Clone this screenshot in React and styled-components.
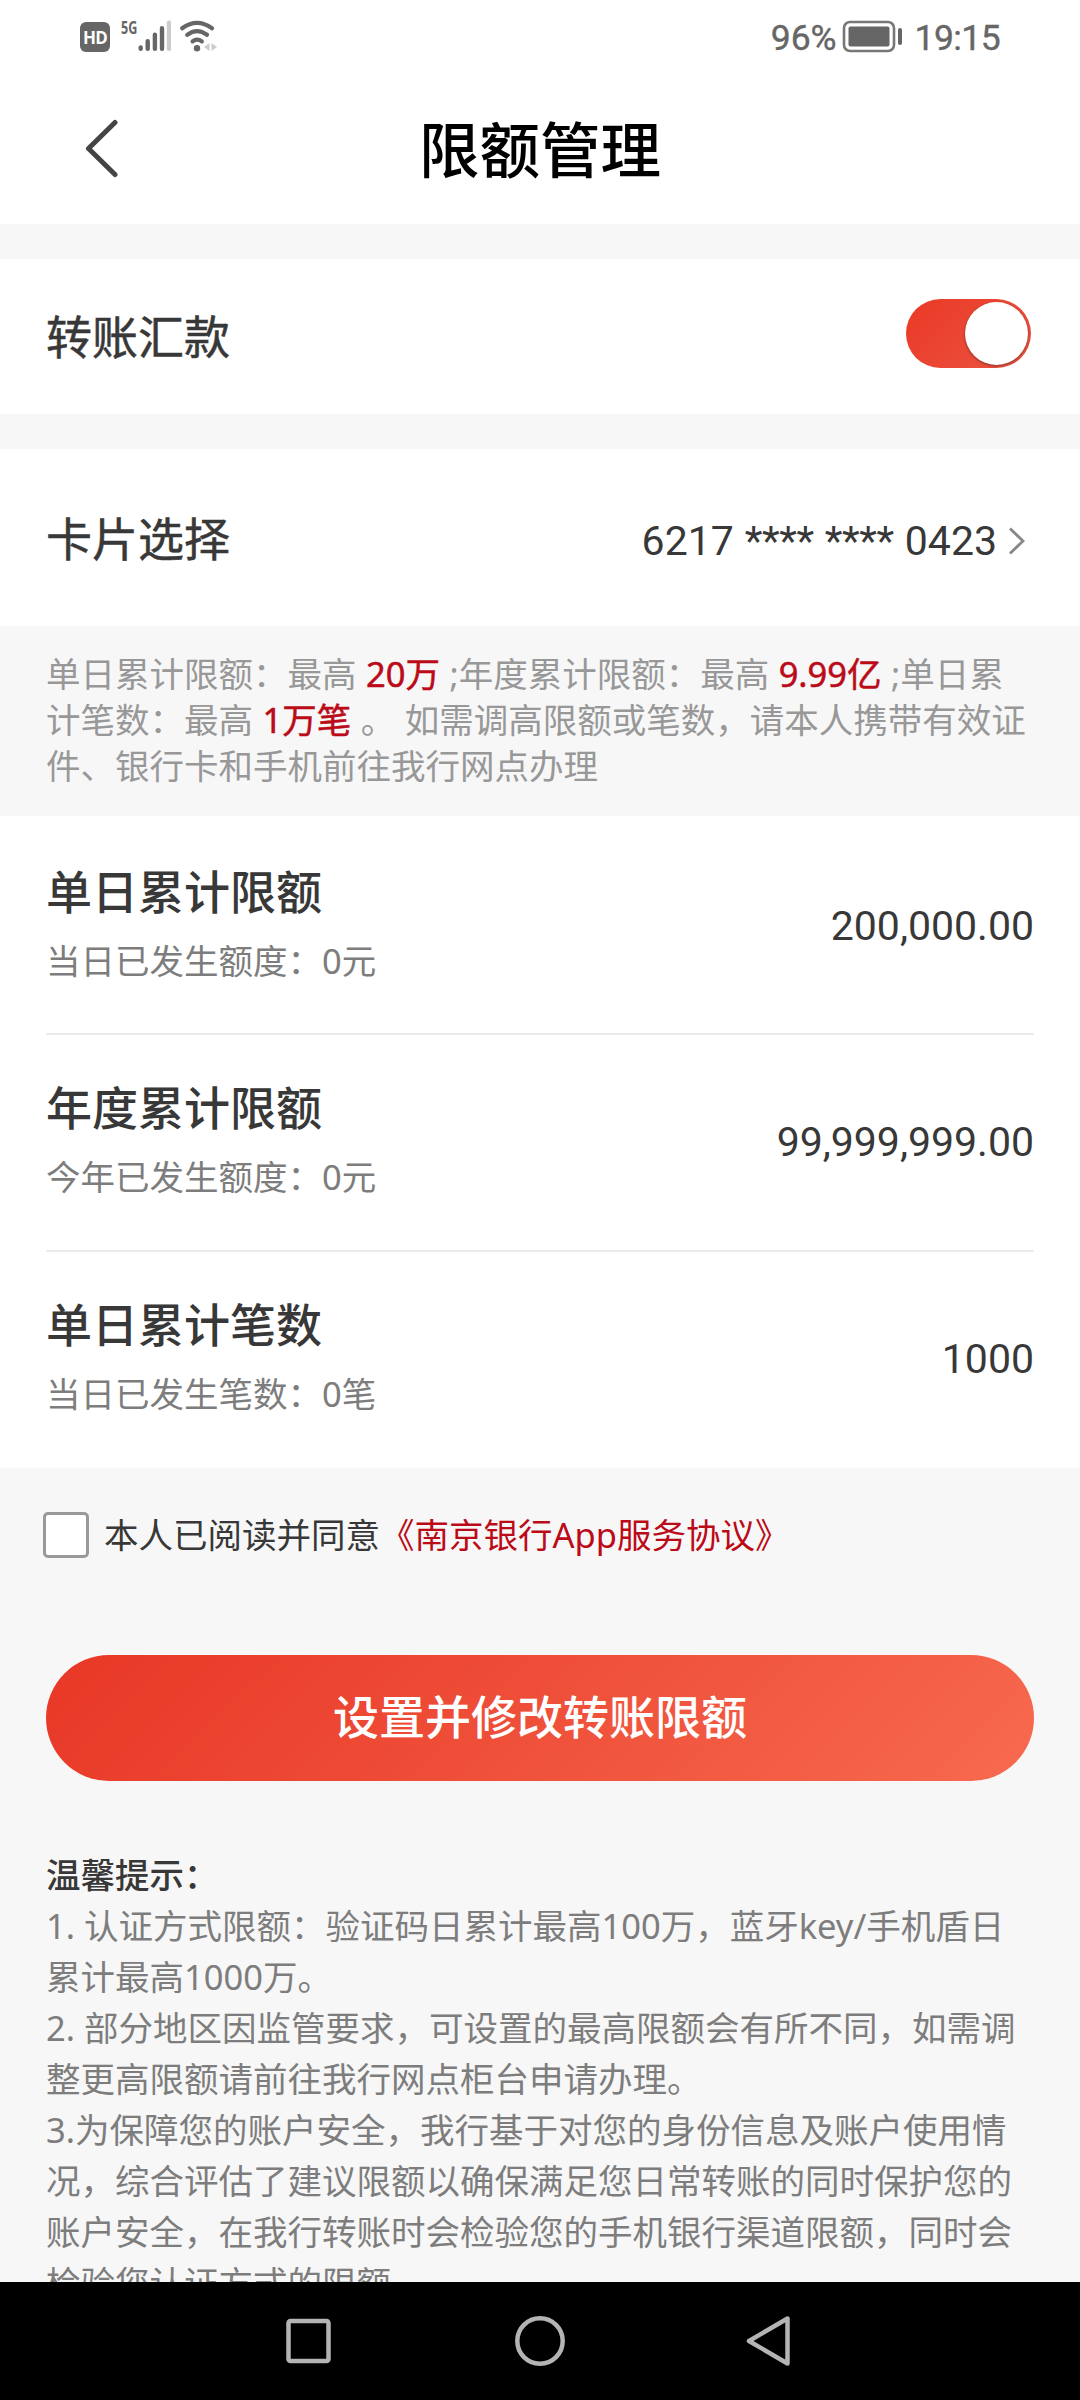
import { useState } from 'react';
import styled, { createGlobalStyle, ThemeProvider } from 'styled-components';

const theme = {
  text: '#383838',
  textGray: '#7d7d7d',
  textLight: '#989898',
  status: '#666',
  red: '#bb0a18',
  page: '#f7f7f7',
  line: '#ebebeb',
  gradient: 'linear-gradient(135deg, #e83726 0%, #ef503a 50%, #f76a4f 100%)',
  fontSizes: {
    title: '60.5px',
    large: '46px',
    number: '41px',
    default: '34.5px',
  },
};

const GlobalStyle = createGlobalStyle`
  * {
    box-sizing: border-box;
  }

  body {
    margin: 0;
    font-family: 'Noto Sans', 'Noto Sans CJK SC', sans-serif;
    text-spacing-trim: space-all;
  }
`;

const Screen = styled.div`
  width: 1080px;
  height: 2400px;
  display: flex;
  flex-direction: column;
  overflow: hidden;
  background-color: ${({ theme }) => theme.page};
  color: ${({ theme }) => theme.text};
  font-size: ${({ theme }) => theme.fontSizes.default};
`;

const StatusBar = styled.div`
  flex: none;
  height: 74px;
  padding: 0 80px;
  display: flex;
  justify-content: space-between;
  background-color: #fff;
  color: ${({ theme }) => theme.status};
`;

const StatusGroup = styled.div`
  display: flex;
  align-items: flex-start;
`;

const HdBadge = styled.span`
  width: 30px;
  height: 30px;
  margin-top: 22px;
  border-radius: 6px;
  background-color: ${({ theme }) => theme.status};
  color: #fff;
  font: 700 17px/31px 'Open Sans', sans-serif;
  text-align: center;
  letter-spacing: -0.7px;
`;

const NetworkType = styled.span`
  width: 17px;
  margin: 17px 0 0 11px;
  font: 700 18px/20px 'Open Sans', sans-serif;
  transform: scaleX(0.7);
  transform-origin: left;
`;

const StatusIcon = styled.svg`
  display: block;
  flex: none;
  margin-right: ${({ $gap = 0 }) => $gap}px;
`;

const StatusText = styled.span`
  margin-right: ${({ $gap = 0 }) => $gap}px;
  font: 400 35.5px/76px Roboto, sans-serif;
  letter-spacing: ${({ $tight }) => ($tight ? '-0.6px' : 'normal')};
  -webkit-text-stroke: 0.4px currentColor;
`;

const TitleBar = styled.header`
  flex: none;
  height: 150px;
  padding: 0 84px;
  display: grid;
  grid-template-columns: 60px 1fr 60px;
  align-items: center;
  background-color: #fff;
`;

const BackButton = styled.button`
  padding: 0;
  border: 0;
  background: none;
  cursor: pointer;

  svg {
    display: block;
  }
`;

const Title = styled.h1`
  margin: 0;
  padding-top: 2px;
  color: #000;
  font-size: ${({ theme }) => theme.fontSizes.title};
  font-weight: 500;
  line-height: 90px;
  text-align: center;
  white-space: nowrap;
`;

const Row = styled.div`
  flex: none;
  height: ${({ $height }) => $height}px;
  margin-top: 35px;
  padding: ${({ $offset = 0 }) => $offset}px 46px 0;
  display: flex;
  align-items: center;
  justify-content: space-between;
  background-color: #fff;
`;

const Label = styled.h2`
  margin: 0;
  font-size: ${({ theme }) => theme.fontSizes.large};
  font-weight: ${({ $strong }) => ($strong ? 500 : 400)};
  line-height: 68px;
  padding-bottom: 2px;
  -webkit-text-stroke: ${({ $strong }) => ($strong ? 0 : '0.5px')} currentColor;
`;

const Toggle = styled.button`
  width: 125px;
  height: 69px;
  margin: 0 3px 7px 0;
  padding: 3px;
  display: flex;
  justify-content: ${({ $on }) => ($on ? 'flex-end' : 'flex-start')};
  border: 0;
  border-radius: 35px;
  background: ${({ $on }) =>
    $on ? 'linear-gradient(135deg, #ea3926, #ea5542)' : '#ccc'};
  cursor: pointer;
`;

const Knob = styled.span`
  width: 63px;
  height: 63px;
  border-radius: 50%;
  background-color: #fff;
  box-shadow: 0 1px 3px rgba(0, 0, 0, 0.4);
`;

const CardNumber = styled.div`
  margin-right: 9px;
  padding-top: 4px;
  display: flex;
  align-items: center;
  gap: 11px;
  font-family: Roboto, sans-serif;
  font-size: ${({ theme }) => theme.fontSizes.number};
  line-height: 60px;
`;

const Mask = styled.span`
  letter-spacing: -0.4px;
`;

const Notice = styled.p`
  flex: none;
  height: 190px;
  margin: 0;
  padding: 25px 46px 0;
  color: ${({ theme }) => theme.textLight};
  line-height: 46px;
  white-space: pre-line;
  word-spacing: 0.5px;

  b {
    color: ${({ theme }) => theme.red};
    font-weight: 400;
    -webkit-text-stroke: 0.5px currentColor;
  }
`;

const LimitList = styled.div`
  flex: none;
  padding: 0 46px 1px;
  background-color: #fff;
`;

const LimitItem = styled.div`
  height: 217px;
  display: flex;
  align-items: center;
  justify-content: space-between;

  & + & {
    padding-bottom: 3px;
    border-top: 2px solid ${({ theme }) => theme.line};
  }
`;

const LimitName = styled.div`
  padding-bottom: 7px;
`;

const Used = styled.div`
  margin-top: 9px;
  color: ${({ theme }) => theme.textGray};
  line-height: 50px;
`;

const Amount = styled.div`
  padding-top: 2px;
  font-family: Roboto, sans-serif;
  font-size: ${({ theme }) => theme.fontSizes.number};
  line-height: 60px;
`;

const Agreement = styled.label`
  flex: none;
  margin: 44px 0 0 43px;
  height: 46px;
  display: flex;
  align-items: center;
  gap: 15px;
  line-height: 46px;
  white-space: nowrap;

  a {
    color: ${({ theme }) => theme.red};
  }
`;

const Checkbox = styled.input`
  appearance: none;
  width: 46px;
  height: 46px;
  margin: 0;
  border: 3px solid #999;
  border-radius: 5px;
  background-color: #fff;

  &:checked {
    background-color: ${({ theme }) => theme.red};
  }
`;

const SubmitButton = styled.button`
  flex: none;
  height: 126px;
  margin: 97px 46px 0;
  padding: 0 0 4px;
  border: 0;
  border-radius: 63px;
  background: ${({ theme }) => theme.gradient};
  color: #fff;
  font-family: inherit;
  font-size: ${({ theme }) => theme.fontSizes.large};
  font-weight: 500;
  line-height: 120px;
  cursor: pointer;
`;

const Tips = styled.section`
  flex: 1;
  min-height: 0;
  overflow: hidden;
  padding: 68px 46px 0;
  color: ${({ theme }) => theme.textGray};
  line-height: 51px;
  white-space: pre-line;

  h3 {
    margin: 0;
    color: ${({ theme }) => theme.text};
    font-size: inherit;
    font-weight: 500;
  }

  p {
    margin: 0;
  }
`;

const NavBar = styled.nav`
  flex: none;
  height: 118px;
  padding: 0 284px;
  display: flex;
  align-items: center;
  justify-content: space-between;
  background-color: #000;

  svg {
    display: block;
    fill: none;
    stroke: #b4b4b4;
    stroke-width: 4.5;
    stroke-linejoin: round;
  }
`;

const limits = [
  { name: '单日累计限额', used: '当日已发生额度：0元', amount: '200,000.00' },
  { name: '年度累计限额', used: '今年已发生额度：0元', amount: '99,999,999.00' },
  { name: '单日累计笔数', used: '当日已发生笔数：0笔', amount: '1000' },
];

const tips = [
  '1. 认证方式限额：验证码日累计最高100万，蓝牙key/手机盾日\n累计最高1000万。',
  '2. 部分地区因监管要求，可设置的最高限额会有所不同，如需调\n整更高限额请前往我行网点柜台申请办理。',
  '3.为保障您的账户安全，我行基于对您的身份信息及账户使用情\n况，综合评估了建议限额以确保满足您日常转账的同时保护您的\n账户安全，在我行转账时会检验您的手机银行渠道限额，同时会\n检验您认证方式的限额',
];

const SignalIcon = () => (
  <StatusIcon
    $gap={8}
    width="33"
    height="74"
    viewBox="0 0 33 74"
    strokeWidth="4.4"
    strokeLinecap="round"
  >
    <path d="M2.700 47.400v1.400M9.700 41.200v7.600M16.900 34.700v14.100M24 28.200v20.600" stroke="#666" />
    <path d="M31 22.700v26.100" stroke="#ccc" />
  </StatusIcon>
);

const WifiIcon = () => (
  <StatusIcon width="40" height="74" viewBox="0 0 40 74">
    <g fill="none" stroke="#666" strokeWidth="4.2" strokeLinecap="round">
      <path d="M3.200 28.300Q18 17.500 33 28.300" />
      <path d="M8.200 34.800Q18 27.300 28 34.800" />
      <path d="M13.600 41.400Q18 37.800 22.800 41.400" />
    </g>
    <circle cx="18" cy="48.2" r="3.2" fill="#666" />
    <path d="M30.500 43v8l-5.500-4zM32.500 43v8l5.500-4z" fill="#ccc" />
  </StatusIcon>
);

const BatteryIcon = () => (
  <StatusIcon $gap={11} width="62" height="74" viewBox="0 0 62 74">
    <rect x="2" y="22" width="50" height="29" rx="6" fill="none" stroke="#777" strokeWidth="2.6" />
    <rect x="6.500" y="26.500" width="41" height="20" rx="2" fill="#666" />
    <rect x="56" y="28" width="4" height="17" rx="2" fill="#666" />
  </StatusIcon>
);

const App = () => {
  const [enabled, setEnabled] = useState(true);

  return (
    <ThemeProvider theme={theme}>
      <GlobalStyle />
      <Screen>
        <StatusBar>
          <StatusGroup>
            <HdBadge>HD</HdBadge>
            <NetworkType>5G</NetworkType>
            <SignalIcon />
            <WifiIcon />
          </StatusGroup>
          <StatusGroup>
            <StatusText $gap={5}>96%</StatusText>
            <BatteryIcon />
            <StatusText $tight>19:15</StatusText>
          </StatusGroup>
        </StatusBar>

        <TitleBar>
          <BackButton aria-label="返回">
            <svg width="36" height="60" viewBox="0 0 36 60">
              <path
                d="M31 3.500L4.500 29.500l26.500 26"
                fill="none"
                stroke="#444"
                strokeWidth="5"
                strokeLinecap="round"
                strokeLinejoin="round"
              />
            </svg>
          </BackButton>
          <Title>限额管理</Title>
        </TitleBar>

        <Row $height={155}>
          <Label>转账汇款</Label>
          <Toggle $on={enabled} onClick={() => setEnabled(!enabled)}>
            <Knob />
          </Toggle>
        </Row>

        <Row $height={177} $offset={2}>
          <Label>卡片选择</Label>
          <CardNumber>
            <span>6217</span>
            <Mask>****</Mask>
            <Mask>****</Mask>
            <span>0423</span>
            <svg width="17" height="28" viewBox="0 0 17 28">
              <path d="M2 1.500L15 14 2 26.500" fill="none" stroke="#888" strokeWidth="2.8" />
            </svg>
          </CardNumber>
        </Row>

        <Notice>
          单日累计限额：最高 <b>20万</b> ;年度累计限额：最高 <b>9.99亿</b> ;单日累{'\n'}
          计笔数：最高 <b>1万笔</b> 。 如需调高限额或笔数，请本人携带有效证{'\n'}
          件、银行卡和手机前往我行网点办理
        </Notice>

        <LimitList>
          {limits.map(({ name, used, amount }) => (
            <LimitItem key={name}>
              <LimitName>
                <Label $strong>{name}</Label>
                <Used>{used}</Used>
              </LimitName>
              <Amount>{amount}</Amount>
            </LimitItem>
          ))}
        </LimitList>

        <Agreement>
          <Checkbox type="checkbox" />
          <span>
            本人已阅读并同意<a>《南京银行App服务协议》</a>
          </span>
        </Agreement>

        <SubmitButton>设置并修改转账限额</SubmitButton>

        <Tips>
          <h3>温馨提示：</h3>
          {tips.map((tip) => (
            <p key={tip}>{tip}</p>
          ))}
        </Tips>

        <NavBar>
          <svg width="50" height="50" viewBox="0 0 50 50">
            <rect x="4.500" y="5" width="40" height="40" rx="2" />
          </svg>
          <svg width="50" height="50" viewBox="0 0 50 50">
            <circle cx="25" cy="25" r="22.700" />
          </svg>
          <svg width="50" height="50" viewBox="0 0 50 50">
            <path d="M41.500 2.500v45L3 25z" />
          </svg>
        </NavBar>
      </Screen>
    </ThemeProvider>
  );
};

export default App;
